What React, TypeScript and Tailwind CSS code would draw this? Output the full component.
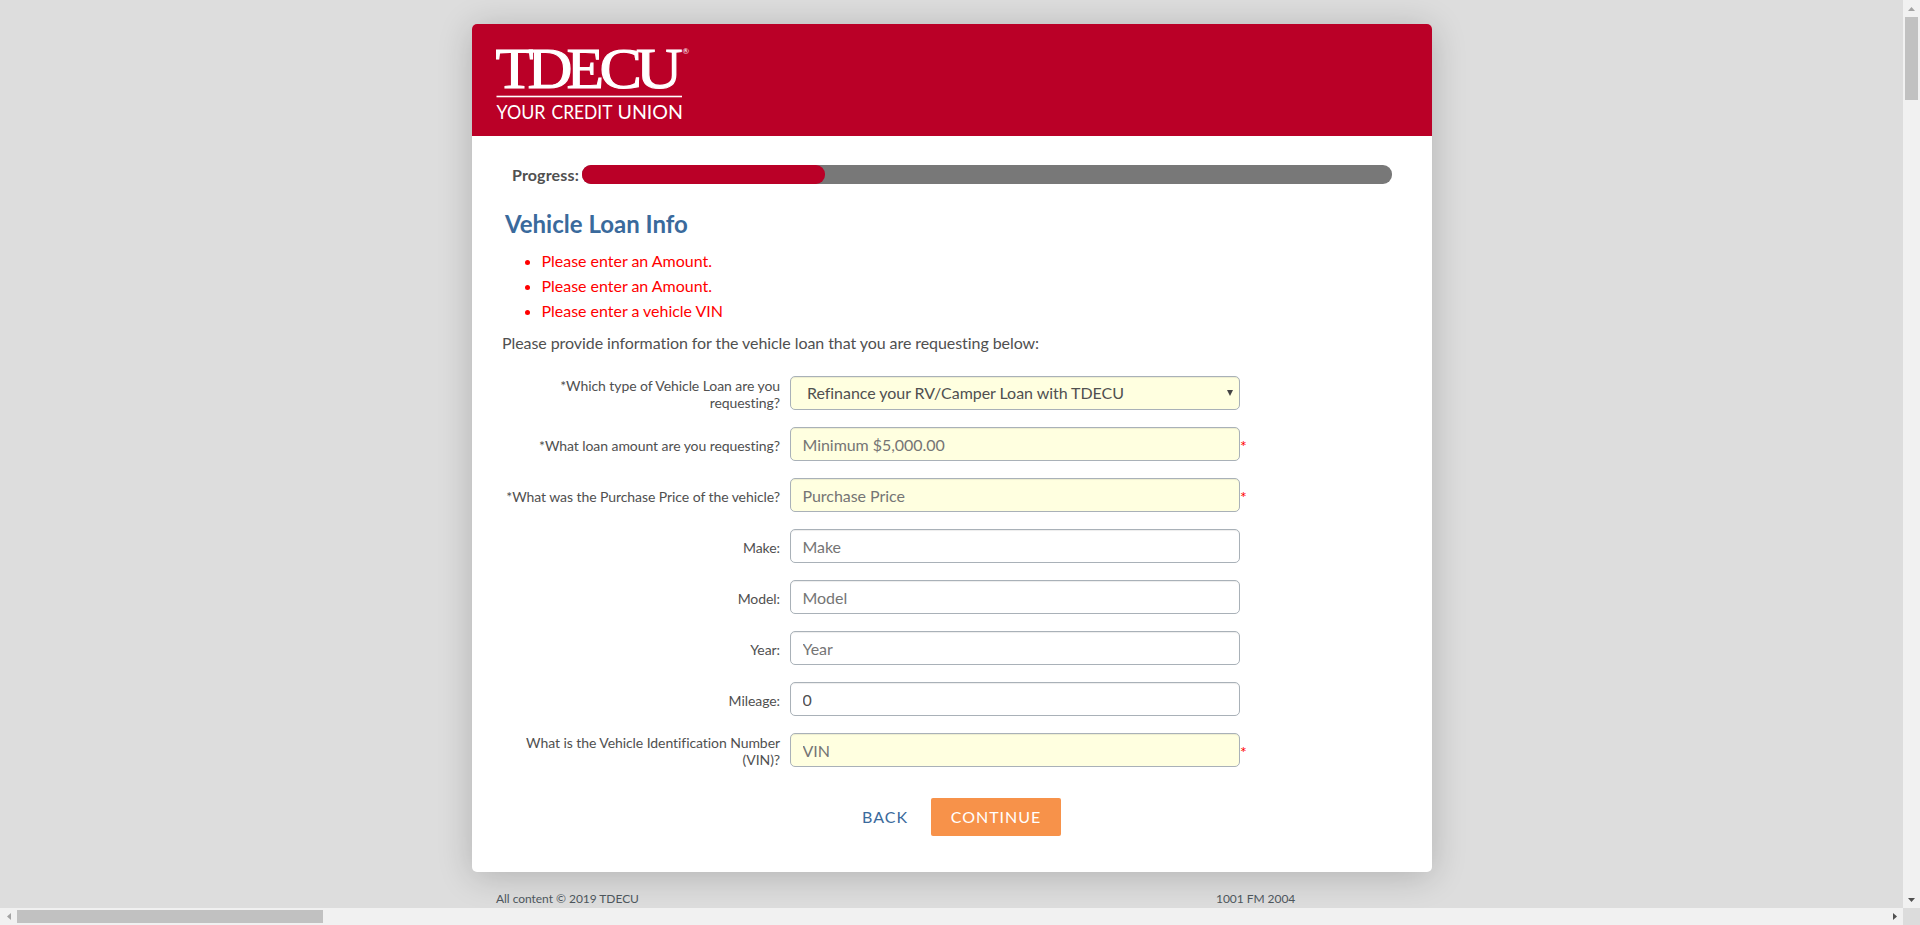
import React from "react";

type Field = {
  id: string;
  label: string;
  placeholder?: string;
  value?: string;
  required?: boolean;
};

const errors = [
  "Please enter an Amount.",
  "Please enter an Amount.",
  "Please enter a vehicle VIN",
];

const fields: Field[] = [
  { id: "amount", label: "*What loan amount are you requesting?", placeholder: "Minimum $5,000.00", required: true },
  { id: "price", label: "*What was the Purchase Price of the vehicle?", placeholder: "Purchase Price", required: true },
  { id: "make", label: "Make:", placeholder: "Make" },
  { id: "model", label: "Model:", placeholder: "Model" },
  { id: "year", label: "Year:", placeholder: "Year" },
  { id: "mileage", label: "Mileage:", value: "0" },
  { id: "vin", label: "What is the Vehicle Identification Number (VIN)?", placeholder: "VIN", required: true },
];

const controlBase =
  "h-[34px] w-[450px] rounded-[5px] border border-[#a9b1b8] text-base text-[#505050] outline-none placeholder:text-[#757575] shadow-[inset_0_1px_1px_rgba(0,0,0,0.075)]";

function Logo() {
  const letters = [
    { c: "T", x: -0.5, w: 38 },
    { c: "D", x: 31.5, w: 45 },
    { c: "E", x: 70.5, w: 37.5 },
    { c: "C", x: 103.5, w: 42.5 },
    { c: "U", x: 140, w: 46.5 },
  ];
  const words = [
    { t: "YOUR", x: 0.5, w: 49 },
    { t: "CREDIT", x: 55.5, w: 61 },
    { t: "UNION", x: 121.5, w: 65.5 },
  ];
  return (
    <svg
      width="196"
      height="84"
      viewBox="0 0 196 84"
      fill="#fff"
      className="overflow-visible"
      aria-label="TDECU Your Credit Union"
    >
      <g
        fontFamily="'Liberation Serif', serif"
        fontSize="58"
        stroke="#fff"
        strokeWidth="1.1"
      >
        {letters.map((l) => (
          <text key={l.c} x={l.x} y="47.7" textLength={l.w} lengthAdjust="spacingAndGlyphs">
            {l.c}
          </text>
        ))}
      </g>
      <text x="186.5" y="14" fontFamily="Lato, sans-serif" fontSize="8">®</text>
      <rect x="0.5" y="55.7" width="185.5" height="1.6" />
      <g fontFamily="Lato, sans-serif" fontSize="19.5">
        {words.map((w) => (
          <text key={w.t} x={w.x} y="79" textLength={w.w} lengthAdjust="spacingAndGlyphs">
            {w.t}
          </text>
        ))}
      </g>
    </svg>
  );
}

function Label({ id, children }: { id: string; children: React.ReactNode }) {
  return (
    <label
      htmlFor={id}
      className="w-[278px] pt-[2px] text-right text-sm leading-[17px] tracking-[-0.07px] text-[#505050]"
    >
      {children}
    </label>
  );
}

function VerticalScrollbar() {
  return (
    <div className="flex w-[17px] flex-col items-center bg-[#f1f1f1]">
      <div className="flex h-[17px] items-center">
        <svg width="7" height="4" fill="#a3a3a3"><path d="M3.5 0 7 4H0z" /></svg>
      </div>
      <div className="h-[83px] w-[13px] bg-[#c1c1c1]" />
      <div className="mt-auto flex h-[17px] items-center">
        <svg width="7" height="4" fill="#505050"><path d="M0 0h7L3.5 4z" /></svg>
      </div>
    </div>
  );
}

function HorizontalScrollbar() {
  return (
    <div className="flex h-[17px]">
      <div className="flex flex-1 items-center bg-[#f1f1f1]">
        <div className="flex w-[17px] justify-center">
          <svg width="4" height="7" fill="#a3a3a3"><path d="M4 0v7L0 3.5z" /></svg>
        </div>
        <div className="h-[13px] w-[306px] bg-[#c1c1c1]" />
        <div className="ml-auto flex w-[17px] justify-center">
          <svg width="4" height="7" fill="#505050"><path d="M0 0v7l4-3.5z" /></svg>
        </div>
      </div>
      <div className="w-[17px] bg-[#dcdcdc]" />
    </div>
  );
}

export default function App() {
  return (
    <div className="flex h-[925px] w-[1920px] flex-col overflow-hidden bg-[#dddddd] font-['Lato',sans-serif] text-base text-[#505050]">
      <div className="flex min-h-0 flex-1">
        <div className="flex flex-1 flex-col items-center overflow-hidden pt-6 pl-px">
          <main className="h-[848px] w-[960px] shrink-0 rounded-[5px] bg-white shadow-[0_4px_35px_rgba(0,0,0,0.2)]">
            <header className="h-28 rounded-t-[5px] bg-[#ba0027] pt-4 pl-6">
              <Logo />
            </header>

            <div className="flex items-center pt-[29px] pl-[40px]">
              <span className="w-[70px] font-bold leading-[19px] tracking-[0.15px]">Progress:</span>
              <div className="h-[19px] w-[810px] rounded-[9px] bg-[#787878]">
                <div className="h-full rounded-[9px] bg-[#ba0027]" style={{ width: "30%" }} />
              </div>
            </div>

            <h1 className="mt-[25px] pl-[33px] text-2xl font-bold leading-[30px] text-[#3a6a9c]">Vehicle Loan Info</h1>

            <ul className="mt-[9px] list-disc pl-[69.5px] leading-[25px] tracking-[-0.02px] text-[#ff0000]">
              {errors.map((e, i) => (
                <li key={i}>{e}</li>
              ))}
            </ul>

            <p className="mt-[7px] pl-[30px] leading-[25px] tracking-[-0.07px]">
              Please provide information for the vehicle loan that you are requesting below:
            </p>

            <form className="mt-[21px] flex flex-col gap-[17px] pl-[30px]" onSubmit={(e) => e.preventDefault()}>
              <div className="flex h-[34px] items-center gap-[10px]">
                <Label id="type">*Which type of Vehicle Loan are you requesting?</Label>
                <div className="relative">
                  <select id="type" className={`${controlBase} appearance-none bg-[#ffffe0] pl-4 tracking-[-0.05px]`}>
                    <option>Refinance your RV/Camper Loan with TDECU</option>
                  </select>
                  <svg className="absolute top-[14px] right-[7px]" width="6" height="6" fill="#444">
                    <path d="M0 0h6L3 6z" />
                  </svg>
                </div>
              </div>
              {fields.map((f) => (
                <div key={f.id} className="flex h-[34px] items-center gap-[10px]">
                  <Label id={f.id}>{f.label}</Label>
                  <div className="flex items-center">
                    <input
                      id={f.id}
                      placeholder={f.placeholder}
                      defaultValue={f.value}
                      className={`${controlBase} px-[11.5px] tracking-[-0.05px] ${f.required ? "bg-[#ffffe0]" : "bg-white"}`}
                    />
                    {f.required && <span className="pt-[3px] text-base leading-none text-[#ff0000]">*</span>}
                  </div>
                </div>
              ))}
              <div className="mt-[14px] flex items-center pl-[359px] tracking-[1px]">
                <button type="button" className="w-[70px] pl-px text-left text-[#3a6a9c]">BACK</button>
                <button type="submit" className="h-[38px] w-[130px] rounded-[2px] bg-[#f7924a] text-white">CONTINUE</button>
              </div>
            </form>
          </main>

          <footer className="flex w-[960px] shrink-0 pt-[19px] pl-6 text-xs leading-4 tracking-[-0.04px] text-[#4d565c]">
            <span className="w-[720px]">All content © 2019 TDECU</span>
            <span>1001 FM 2004</span>
          </footer>
        </div>
        <VerticalScrollbar />
      </div>
      <HorizontalScrollbar />
    </div>
  );
}
